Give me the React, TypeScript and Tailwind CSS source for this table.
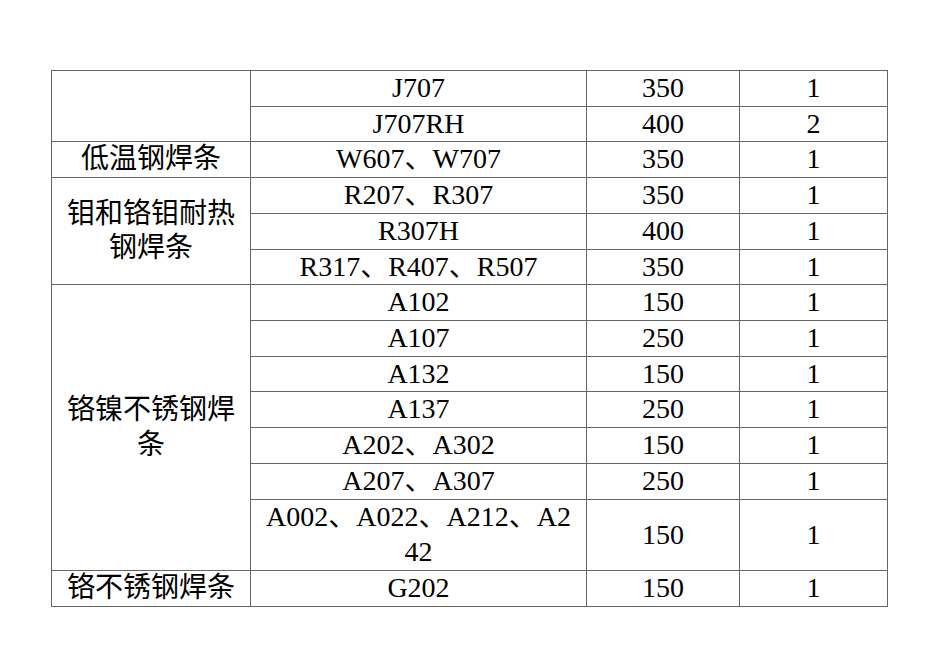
import React from "react"

type Row = {
  group?: { label: React.ReactNode; span: number }
  model: React.ReactNode
  temp: string
  hours: string
  tall?: boolean
}

const rows: Row[] = [
  { group: { label: "", span: 2 }, model: "J707", temp: "350", hours: "1" },
  { model: "J707RH", temp: "400", hours: "2" },
  { group: { label: "低温钢焊条", span: 1 }, model: "W607、W707", temp: "350", hours: "1" },
  {
    group: { label: <>钼和铬钼耐热<br />钢焊条</>, span: 3 },
    model: "R207、R307",
    temp: "350",
    hours: "1",
  },
  { model: "R307H", temp: "400", hours: "1" },
  { model: "R317、R407、R507", temp: "350", hours: "1" },
  {
    group: { label: <>铬镍不锈钢焊<br />条</>, span: 7 },
    model: "A102",
    temp: "150",
    hours: "1",
  },
  { model: "A107", temp: "250", hours: "1" },
  { model: "A132", temp: "150", hours: "1" },
  { model: "A137", temp: "250", hours: "1" },
  { model: "A202、A302", temp: "150", hours: "1" },
  { model: "A207、A307", temp: "250", hours: "1" },
  { model: <>A002、A022、A212、A2<br />42</>, temp: "150", hours: "1", tall: true },
  { group: { label: "铬不锈钢焊条", span: 1 }, model: "G202", temp: "150", hours: "1" },
]

const cell = "border border-[#666] p-0 text-center align-middle whitespace-nowrap"

export default function App() {
  return (
    <div className="w-[950px] h-[672px] bg-white pt-[70px] pl-[51px] font-['Liberation_Serif','Noto_Sans_CJK_SC',serif] text-[28px] leading-[34.7px] text-black">
      <table className="border-collapse table-fixed w-[836px]">
        <colgroup>
          <col className="w-[199px]" />
          <col className="w-[336px]" />
          <col className="w-[153px]" />
          <col className="w-[148px]" />
        </colgroup>
        <tbody>
          {rows.map((r, i) => (
            <tr key={i} className={r.tall ? "h-[71.46px]" : "h-[35.73px]"}>
              {r.group && (
                <td rowSpan={r.group.span} className={cell}>
                  {r.group.label}
                </td>
              )}
              <td className={cell}>{r.model}</td>
              <td className={cell}>{r.temp}</td>
              <td className={cell}>{r.hours}</td>
            </tr>
          ))}
        </tbody>
      </table>
    </div>
  )
}
